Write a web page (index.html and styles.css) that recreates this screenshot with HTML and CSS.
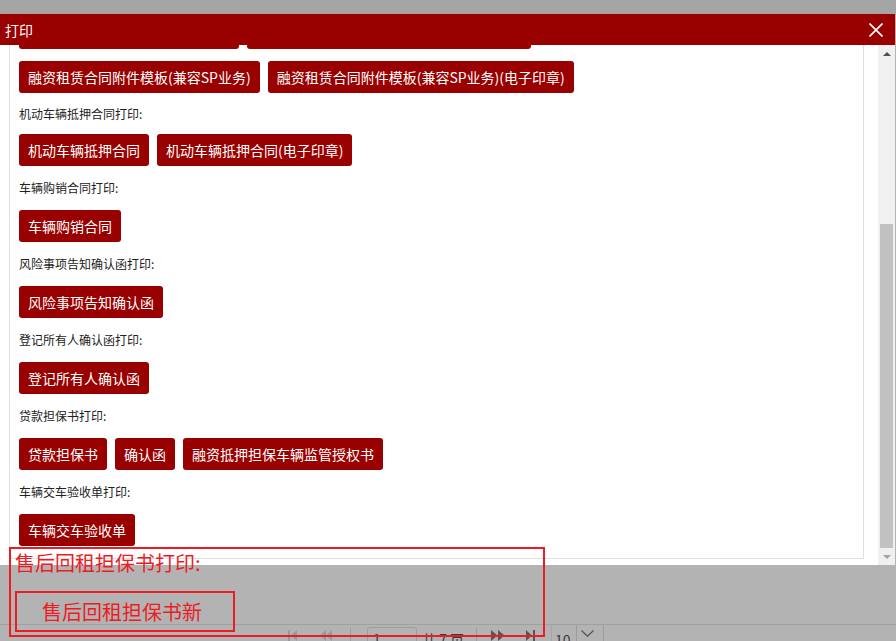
FILE: index.html
```html
<!DOCTYPE html>
<html lang="zh-CN">
<head>
<meta charset="utf-8">
<title>打印</title>
<link rel="stylesheet" href="styles.css">
</head>
<body>
<div class="topband"></div>
<div class="dialog">
  <div class="titlebar">
    <span class="title">打印</span>
    <svg class="close" width="14" height="14" viewBox="0 0 14 14"><path d="M0.5 0.5L13.5 13.5M13.5 0.5L0.5 13.5" stroke="#fff" stroke-width="1.6" fill="none"/></svg>
  </div>
  <div class="dlg-body">
    <div class="panel-wrap">
      <div class="panel">
        <div class="sec sec-first">
          <div class="sec-label">融资租赁合同打印:</div>
          <div class="btns"><button class="btn btn-a">融资租赁合同模板(兼容SP业务)</button><button class="btn btn-b">融资租赁合同模板(兼容SP业务)(电子印章)</button></div>
          <div class="btns row2"><button class="btn">融资租赁合同附件模板(兼容SP业务)</button><button class="btn">融资租赁合同附件模板(兼容SP业务)(电子印章)</button></div>
        </div>
        <div class="sec">
          <div class="sec-label short">机动车辆抵押合同打印:</div>
          <div class="btns"><button class="btn">机动车辆抵押合同</button><button class="btn">机动车辆抵押合同(电子印章)</button></div>
        </div>
        <div class="sec">
          <div class="sec-label">车辆购销合同打印:</div>
          <div class="btns"><button class="btn">车辆购销合同</button></div>
        </div>
        <div class="sec">
          <div class="sec-label">风险事项告知确认函打印:</div>
          <div class="btns"><button class="btn">风险事项告知确认函</button></div>
        </div>
        <div class="sec">
          <div class="sec-label">登记所有人确认函打印:</div>
          <div class="btns"><button class="btn">登记所有人确认函</button></div>
        </div>
        <div class="sec">
          <div class="sec-label">贷款担保书打印:</div>
          <div class="btns"><button class="btn">贷款担保书</button><button class="btn">确认函</button><button class="btn">融资抵押担保车辆监管授权书</button></div>
        </div>
        <div class="sec">
          <div class="sec-label">车辆交车验收单打印:</div>
          <div class="btns"><button class="btn">车辆交车验收单</button></div>
        </div>
      </div>
    </div>
    <div class="scrollbar">
      <div class="sb-btn"><span class="tri-up"></span></div>
      <div class="sb-track"><div class="sb-thumb"></div></div>
      <div class="sb-btn"><span class="tri-down"></span></div>
    </div>
  </div>
</div>
<div class="below">
  <div class="pager">
    <svg class="pg-first" width="9" height="11" viewBox="0 0 9 11"><rect x="0" y="0" width="2" height="11" fill="#999"/><path d="M9 0V11L3 5.5Z" fill="#999"/></svg>
    <svg class="pg-prev" width="12" height="11" viewBox="0 0 12 11"><path d="M6 0V11L0 5.5Z M12 0V11L6 5.5Z" fill="#999"/></svg>
    <span class="pg-sep"></span>
    <span class="pg-input">1</span>
    <span class="pg-total">共 7 页</span>
    <span class="pg-sep sep2"></span>
    <svg class="pg-next" width="14" height="11" viewBox="0 0 14 11"><path d="M0 0V11L6.5 5.5Z M7 0V11L13.5 5.5Z" fill="#555"/></svg>
    <svg class="pg-last" width="9" height="11" viewBox="0 0 9 11"><path d="M0 0V11L6 5.5Z" fill="#555"/><rect x="7" y="0" width="2" height="11" fill="#555"/></svg>
    <span class="pg-size"><span class="pg-size-val">10</span><span class="pg-size-arrow"><svg width="13" height="7" viewBox="0 0 13 7"><path d="M0.5 0.5L6.5 6.3L12.5 0.5" stroke="#555" stroke-width="1.2" fill="none"/></svg></span></span>
  </div>
</div>
<div class="note">
  <div class="note-label">售后回租担保书打印:</div>
  <div class="note-btn">售后回租担保书新</div>
</div>
</body>
</html>
```

FILE: styles.css
```css
* { box-sizing: border-box; }
html, body {
  margin: 0;
  padding: 0;
}
body {
  width: 896px;
  height: 641px;
  overflow: hidden;
  position: relative;
  background: #b3b3b3;
  font-family: "Noto Sans CJK SC", "Microsoft YaHei", sans-serif;
}
.topband {
  height: 14px;
  background: #a5a5a5;
}
.dialog {
  width: 895px;
  background: #fff;
}
.titlebar {
  height: 31px;
  background: #990000;
  color: #fff;
  display: flex;
  align-items: center;
  justify-content: space-between;
  padding: 0 12px 0 5px;
  font-size: 14px;
  position: relative;
  z-index: 1;
}
.title { line-height: 20px; }
.close { display: block; }
.dlg-body {
  height: 520px;
  display: flex;
}
.panel-wrap {
  flex: 1;
  display: flex;
  padding: 0 14px 6px 9px;
}
.panel {
  flex: 1;
  border: 1px solid #e0e0e0;
  border-top: none;
  overflow: hidden;
  display: flex;
  flex-direction: column;
  justify-content: flex-end;
  padding: 0 9px 12px;
}
.sec { flex: none; }
.sec-label {
  height: 44px;
  line-height: 44px;
  font-size: 12px;
  color: #222;
  white-space: nowrap;
}
.sec-label.short {
  height: 41px;
  line-height: 41px;
}
.btns {
  display: flex;
  gap: 8px;
}
.btns.row2 { margin-top: 12px; }
.btn {
  height: 32px;
  padding: 0 9px;
  border: none;
  border-radius: 3px;
  background: #990000;
  color: #fff;
  font-family: "Noto Sans CJK SC", "Microsoft YaHei", sans-serif;
  font-size: 14px;
  line-height: 32px;
  white-space: nowrap;
  margin: 0;
}
.btn-a { width: 220px; }
.btn-b { width: 284px; }
.scrollbar {
  width: 17px;
  background: #f0f0f0;
  display: flex;
  flex-direction: column;
}
.sb-btn {
  height: 17px;
  display: flex;
  align-items: center;
  justify-content: center;
}
.tri-up {
  width: 0;
  height: 0;
  border-left: 4px solid transparent;
  border-right: 4px solid transparent;
  border-bottom: 4px solid #505050;
}
.tri-down {
  width: 0;
  height: 0;
  border-left: 4px solid transparent;
  border-right: 4px solid transparent;
  border-top: 4px solid #a3a3a3;
}
.sb-track {
  flex: 1;
  padding: 162px 2px 0;
}
.sb-thumb {
  height: 324px;
  background: #c1c1c1;
}
.below {
  height: 76px;
}
.pager {
  margin-top: 59px;
  height: 40px;
  border-top: 1px solid #a0a0a0;
  display: flex;
  align-items: flex-start;
  padding-left: 288px;
  font-size: 14px;
  color: #3a3a3a;
}
.pager svg { display: block; flex: none; }
.pg-first { margin-top: 5px; }
.pg-prev { margin-top: 5px; margin-left: 23px; }
.pg-sep {
  width: 1px;
  height: 20px;
  margin-top: 3px;
  margin-left: 18px;
  background: #9c9c9c;
}
.pg-input {
  margin-left: 16px;
  margin-top: 2px;
  width: 50px;
  height: 24px;
  border: 1px solid #9d9d9d;
  border-radius: 3px;
  padding-left: 5px;
  line-height: 22px;
}
.pg-total {
  margin-left: 5px;
  line-height: 24px;
  margin-top: 2px;
  white-space: nowrap;
}
.sep2 { margin-left: 12px; }
.pg-next { margin-top: 5px; margin-left: 14px; }
.pg-last { margin-top: 5px; margin-left: 21px; }
.pg-size {
  margin-left: 16px;
  display: flex;
  height: 26px;
  border-left: 1px solid #a5a5a5;
  border-right: 1px solid #9c9c9c;
}
.pg-size-val {
  width: 24px;
  padding-left: 3px;
  line-height: 26px;
  margin-top: 2px;
}
.pg-size-arrow {
  width: 27px;
  border-left: 1px solid #9c9c9c;
  padding: 5px 0 0 4px;
}
.note {
  position: absolute;
  left: 9px;
  top: 547px;
  width: 536px;
  height: 90px;
  border: 2px solid #ed1c24;
  padding-left: 4px;
  color: #ed1c24;
  font-size: 20px;
  z-index: 2;
}
.note-label {
  line-height: 28px;
  white-space: nowrap;
}
.note-btn {
  margin-top: 14px;
  width: 220px;
  height: 41px;
  border: 2px solid #ed1c24;
  padding-left: 25px;
  line-height: 37px;
  white-space: nowrap;
}
```
